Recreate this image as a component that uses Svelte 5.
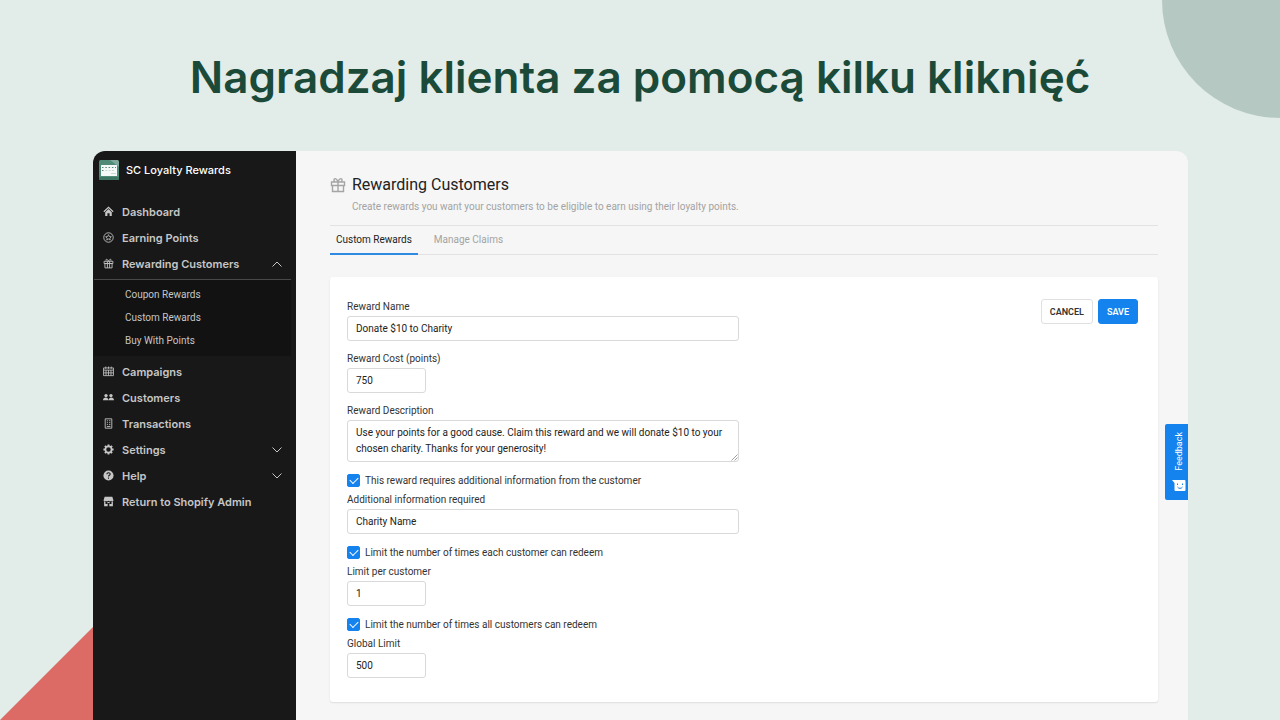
<script>
  const topLinks = [
    { label: 'Dashboard', icon: 'home' },
    { label: 'Earning Points', icon: 'star' },
    { label: 'Rewarding Customers', icon: 'gift', open: true }
  ];
  const subLinks = ['Coupon Rewards', 'Custom Rewards', 'Buy With Points'];
  const bottomLinks = [
    { label: 'Campaigns', icon: 'calendar' },
    { label: 'Customers', icon: 'people' },
    { label: 'Transactions', icon: 'receipt' },
    { label: 'Settings', icon: 'gear', open: false },
    { label: 'Help', icon: 'help' , open: false },
    { label: 'Return to Shopify Admin', icon: 'store' }
  ];

  let name = $state('Donate $10 to Charity');
  let cost = $state('750');
  let description = $state(
    'Use your points for a good cause. Claim this reward and we will donate $10 to your chosen charity. Thanks for your generosity!'
  );
  let needsInfo = $state(true);
  let info = $state('Charity Name');
  let limitEach = $state(true);
  let perCustomer = $state('1');
  let limitAll = $state(true);
  let globalLimit = $state('500');
</script>

{#snippet icon(kind)}
  <svg class="icon" viewBox="0 0 20 20" aria-hidden="true">
    {#if kind === 'home'}
      <path d="M1.5 10.5 10 2.5l8.5 8" fill="none" stroke="currentColor" stroke-width="2.2" />
      <path d="M4 11.2 10 5.6l6 5.6V18h-4v-5H8v5H4z" fill="currentColor" />
    {:else if kind === 'star'}
      <circle cx="10" cy="10" r="8.6" fill="none" stroke="currentColor" stroke-width="1.6" />
      <path d="m10 4.8 1.5 3.4 3.7.4-2.8 2.5.8 3.6-3.2-1.9-3.2 1.9.8-3.6-2.8-2.5 3.7-.4z" fill="none" stroke="currentColor" stroke-width="1.4" />
    {:else if kind === 'gift'}
      <path d="M2 6h16v4H2zM3.5 10h13v8h-13zM8 6v12M12 6v12M10 6C8 1 4.500 1.500 5.500 5M10 6c2-5 5.500-4.500 4.500-1" fill="none" stroke="currentColor" stroke-width="1.6" />
    {:else if kind === 'calendar'}
      <path d="M1 3.500h18v14H1zM1 7.500h18M1 12.500h18M5.500 7.500v10M10 7.500v10M14.500 7.500v10M5 1v4M10 1v4M15 1v4" fill="none" stroke="currentColor" stroke-width="1.5" />
    {:else if kind === 'people'}
      <g fill="currentColor">
        <circle cx="5.500" cy="6.500" r="3" />
        <circle cx="14.500" cy="6.500" r="3" />
        <path d="M0 15c0-6.500 9.800-6.500 9.800 0zM10.200 15c0-6.500 9.800-6.500 9.800 0z" />
      </g>
    {:else if kind === 'receipt'}
      <path d="M4 1.500h12v17H4z" fill="none" stroke="currentColor" stroke-width="1.600" />
      <path d="M7 5h2M11 5h2.500M7 8.500h2M11 8.500h2.500M7 12h2M11 12h2.500M7 15.500h6.500" stroke="currentColor" stroke-width="1.600" />
    {:else if kind === 'gear'}
      <circle cx="10" cy="10" r="5.600" fill="none" stroke="currentColor" stroke-width="3" />
      <path d="M10 .8v3M10 16.200v3M.8 10h3M16.200 10h3M3.500 3.500l2.100 2.100M14.400 14.400l2.100 2.100M3.500 16.500l2.100-2.100M14.400 5.600l2.100-2.100" stroke="currentColor" stroke-width="3.400" />
    {:else if kind === 'help'}
      <circle cx="10" cy="10" r="9.200" fill="currentColor" />
      <path d="M7 7.600c.2-3.600 6.200-3.400 6 .1-.1 2-3 2-3 4.300M10 13.600v2.200" fill="none" stroke="#181818" stroke-width="2" />
    {:else}
      <path d="M3 1.500h14l2 6.500c-.5 2-3 2-4 .5-1.500 1.500-3 1.500-5 0-2 1.500-3.500 1.500-5 0-1 1.500-3.500 1.500-4-.5z" fill="currentColor" />
      <path d="M2 10v8.500h16V10h-2.500v4.500H12V11H8v3.500H4.500V10zM8.500 12.500v6h3v-6z" fill="currentColor" fill-rule="evenodd" />
    {/if}
  </svg>
{/snippet}

{#snippet navItem(item)}
  <li>
    <a class="nav-link" href="#top">
      {@render icon(item.icon)}
      <span class="nav-label">{item.label}</span>
      {#if item.open !== undefined}
        <svg class="chevron" viewBox="0 0 12 8" aria-hidden="true">
          <path d={item.open ? 'M1.500 6.500 6 2l4.500 4.500' : 'M1.500 1.500 6 6l4.500-4.500'} fill="none" stroke="currentColor" />
        </svg>
      {/if}
    </a>
  </li>
{/snippet}

<div class="page">
  <div class="circle"></div>
  <svg class="triangle" viewBox="0 0 93 93" aria-hidden="true"><path d="M0 93 93 0v93z" fill="#dc6b66" /></svg>

  <h1>Nagradzaj klienta za pomocą kilku kliknięć</h1>

  <div class="window">
    <aside>
      <div class="brand">
        <svg class="logo" viewBox="0 0 20 20" aria-hidden="true">
          <rect width="20" height="20" rx="1.500" fill="#4f8b79" />
          <path d="M11 0h7.500L20 1.500V7z" fill="#81a99b" />
          <rect y="17" width="20" height="3" rx="1" fill="#3d7764" />
          <rect x="2" y="5" width="16" height="11" rx=".5" fill="#f5faf8" />
          <path d="M3 7.500h1.500M6.300 7.500h1.500M9.600 7.500h1.500M12.900 7.500h1.500M16 7.500h1M3 10.500h1.500" stroke="#4f8b79" />
          <path d="M6.300 10.500h2M9.600 10.500h2M12.900 10.500h2M12 13.500h5" stroke="#c8d8d2" />
        </svg>
        <span>SC Loyalty Rewards</span>
      </div>
      <nav>
        <ul>
          {#each topLinks as item}{@render navItem(item)}{/each}
        </ul>
        <ul class="submenu">
          {#each subLinks as label}
            <li><a class="sub-link" href="#top">{label}</a></li>
          {/each}
        </ul>
        <ul>
          {#each bottomLinks as item}{@render navItem(item)}{/each}
        </ul>
      </nav>
    </aside>

    <main>
      <header>
        <svg class="title-icon" viewBox="0 0 16 16" aria-hidden="true">
          <path d="M1.500 5h13v3.500h-13zM2.500 8.500h11v6h-11zM8 5v9.500M8 5C6.500.5 3.500 1 4 3.500 4.200 4.500 5 5 5 5M8 5c1.500-4.500 4.500-4 4-1.500-.2 1-1 1.500-1 1.500" fill="none" stroke="currentColor" stroke-width="1.400" />
        </svg>
        <h2>Rewarding Customers</h2>
        <p>Create rewards you want your customers to be eligible to earn using their loyalty points.</p>
      </header>

      <div class="tabs" role="tablist">
        <button type="button" role="tab" class="tab active" aria-selected="true">Custom Rewards</button>
        <button type="button" role="tab" class="tab" aria-selected="false">Manage Claims</button>
      </div>

      <form class="card">
        <div class="fields">
          <div class="field">
            <label for="name">Reward Name</label>
            <input id="name" type="text" bind:value={name} />
          </div>
          <div class="field">
            <label for="cost">Reward Cost (points)</label>
            <input id="cost" class="short" type="text" bind:value={cost} />
          </div>
          <div class="field">
            <label for="description">Reward Description</label>
            <div class="area">
              <textarea id="description" bind:value={description}></textarea>
              <svg class="grip" viewBox="0 0 7 7" aria-hidden="true"><path d="M.5 6.500l6-6M3.500 6.500l3-3" stroke="#888" stroke-width=".8" /></svg>
            </div>
          </div>
          <div class="field">
            <label class="check"><input type="checkbox" bind:checked={needsInfo} />This reward requires additional information from the customer</label>
            <label for="info">Additional information required</label>
            <input id="info" type="text" bind:value={info} />
          </div>
          <div class="field">
            <label class="check"><input type="checkbox" bind:checked={limitEach} />Limit the number of times each customer can redeem</label>
            <label for="per">Limit per customer</label>
            <input id="per" class="short" type="text" bind:value={perCustomer} />
          </div>
          <div class="field">
            <label class="check"><input type="checkbox" bind:checked={limitAll} />Limit the number of times all customers can redeem</label>
            <label for="global">Global Limit</label>
            <input id="global" class="short" type="text" bind:value={globalLimit} />
          </div>
        </div>
        <div class="actions">
          <button type="button" class="btn">CANCEL</button>
          <button type="button" class="btn primary">SAVE</button>
        </div>
      </form>
    </main>

    <button type="button" class="feedback">
      <span>Feedback</span>
      <svg viewBox="0 0 14 12" aria-hidden="true">
        <path d="M0 0h12.500q1 0 1 1v9q0 1-1 1h-9q-1 0-1-1V3z" fill="#fff" />
        <path d="M5.500 3.500v1.500M10.500 3.500v1.500M5.500 7c1 1.800 4 1.800 5 0" fill="none" stroke="#1583ee" />
      </svg>
    </button>
  </div>
</div>

<style>
  :global(body) {
    margin: 0;
  }
  * {
    box-sizing: border-box;
  }
  .page {
    position: relative;
    display: flex;
    flex-direction: column;
    height: 100vh;
    overflow: hidden;
    background: #e2ede9;
    font-family: Roboto, 'Liberation Sans', sans-serif;
    font-size: 10px;
    color: #333;
  }
  .circle {
    position: absolute;
    top: -118px;
    right: -118px;
    width: 236px;
    height: 236px;
    border-radius: 50%;
    background: #b5c9c2;
  }
  .triangle {
    position: absolute;
    left: 0;
    bottom: 0;
    width: 93px;
    height: 93px;
  }
  h1 {
    position: relative;
    margin: 0;
    padding: 47px 0 44px;
    text-align: center;
    font-family: Inter, sans-serif;
    font-size: 44px;
    line-height: 60px;
    font-weight: 600;
    color: #1c4a39;
  }
  .window {
    position: relative;
    flex: 1;
    min-height: 0;
    display: flex;
    margin: 0 92px 0 93px;
    border-radius: 12px 12px 0 0;
    overflow: hidden;
    background: #f6f6f6;
  }
  aside {
    width: 203px;
    flex: none;
    background: #181818;
    color: #c6c6c6;
  }
  .brand {
    display: flex;
    align-items: center;
    gap: 7px;
    height: 38px;
    padding-left: 6px;
    font-family: Inter, sans-serif;
    font-size: 11px;
    font-weight: 500;
    color: #fff;
  }
  .logo {
    width: 20px;
    height: 20px;
  }
  nav {
    padding-top: 10px;
  }
  ul {
    list-style: none;
    margin: 0;
    padding: 0;
  }
  a {
    text-decoration: none;
    color: inherit;
  }
  .nav-link {
    display: flex;
    align-items: center;
    height: 26px;
    padding: 0 13px 0 10px;
    font-family: Inter, sans-serif;
    font-size: 11px;
    font-weight: 600;
  }
  .icon {
    width: 11px;
    height: 11px;
    margin: 0 8px 2px 0;
  }
  .nav-label {
    flex: 1;
  }
  .chevron {
    width: 12px;
    height: 8px;
  }
  .submenu {
    margin: 2px 5px 3px 1px;
    padding: 3px 0 4px;
    border-top: 1px solid #484848;
    background: #121212;
  }
  .sub-link {
    display: flex;
    align-items: center;
    height: 23px;
    padding-left: 31px;
  }
  main {
    flex: 1;
    min-width: 0;
    padding: 23px 30px 0 34px;
  }
  header {
    display: grid;
    grid-template-columns: 16px 1fr;
    column-gap: 6px;
    align-items: center;
    padding-bottom: 8px;
    border-bottom: 1px solid #e2e2e2;
  }
  .title-icon {
    width: 16px;
    height: 16px;
    color: #a5a5a5;
  }
  h2 {
    margin: 0;
    font-size: 16px;
    line-height: 22px;
    font-weight: 400;
    color: #222;
  }
  header p {
    grid-column: 2;
    margin: 0;
    line-height: 21px;
    color: #a3a3a3;
  }
  .tabs {
    display: flex;
    gap: 10px;
    height: 29px;
    border-bottom: 1px solid #e2e2e2;
  }
  button {
    font: inherit;
    margin: 0;
    cursor: pointer;
  }
  .tab {
    height: 29px;
    padding: 0 6px;
    border: 0;
    border-bottom: 2px solid transparent;
    background: none;
    color: #a3a3a3;
  }
  .tab.active {
    border-color: #2f8be0;
    color: #222;
  }
  .card {
    display: flex;
    align-items: flex-start;
    justify-content: space-between;
    gap: 24px;
    margin-top: 22px;
    padding: 20px 20px 24px 17px;
    border-radius: 3px;
    background: #fff;
    box-shadow: 0 1px 2px #0000001a;
  }
  .fields {
    display: flex;
    flex-direction: column;
    gap: 8px;
    flex: 0 1 392px;
  }
  .field {
    display: flex;
    flex-direction: column;
  }
  label {
    line-height: 19px;
  }
  input[type='text'],
  textarea {
    width: 100%;
    height: 25px;
    margin: 0;
    padding: 0 8px;
    border: 1px solid #d9d9d9;
    border-radius: 3px;
    background: #fff;
    font: inherit;
    color: #222;
  }
  input.short {
    width: 79px;
  }
  .area {
    position: relative;
    display: flex;
  }
  textarea {
    height: 42px;
    padding: 4px 8px;
    line-height: 16px;
    resize: none;
    overflow: hidden;
  }
  .grip {
    position: absolute;
    right: 1px;
    bottom: 1px;
    width: 7px;
    height: 7px;
  }
  .check {
    display: flex;
    align-items: center;
    gap: 5px;
    height: 20px;
  }
  .check input {
    appearance: none;
    display: grid;
    place-items: center;
    width: 13px;
    height: 13px;
    margin: 0;
    border: 1px solid #d9d9d9;
    border-radius: 2px;
  }
  .check input:checked {
    border-color: #1583ee;
    background: #1583ee;
  }
  .check input:checked::after {
    content: '';
    width: 7px;
    height: 4px;
    margin-bottom: 2px;
    border: solid #fff;
    border-width: 0 0 1px 1px;
    transform: rotate(-45deg);
  }
  .actions {
    display: flex;
    gap: 5px;
    padding-top: 2px;
  }
  .btn {
    height: 25px;
    padding: 0 8px;
    border: 1px solid #e0e0e0;
    border-radius: 3px;
    background: #fff;
    font-size: 9px;
    font-weight: 600;
    color: #333;
  }
  .btn.primary {
    border-color: #1583ee;
    background: #1583ee;
    color: #fff;
  }
  .feedback {
    position: absolute;
    top: 273px;
    right: 0;
    display: flex;
    flex-direction: column;
    align-items: center;
    justify-content: space-between;
    width: 23px;
    height: 76px;
    padding: 8px 0 8px 4px;
    border: 0;
    border-radius: 2px 0 0 2px;
    background: #1583ee;
    color: #fff;
    font-size: 9px;
    line-height: 12px;
  }
  .feedback span {
    writing-mode: vertical-rl;
    transform: rotate(180deg);
  }
  .feedback svg {
    width: 14px;
    height: 12px;
  }
</style>
